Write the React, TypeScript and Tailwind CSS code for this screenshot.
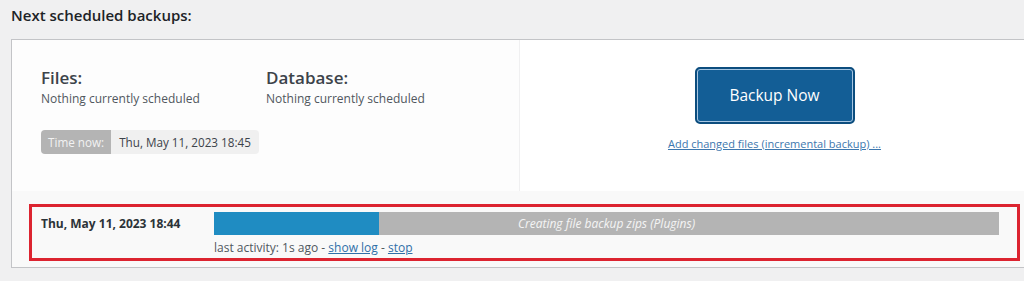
export default function App() {
  const font = { fontFamily: '"Open Sans", "Noto Sans", sans-serif' };

  return (
    <div className="h-[281px] overflow-hidden bg-[#f0f0f1] pt-[5px] text-[#3c434a]" style={font}>
      <h2 className="pl-[11px] text-[15px] leading-[20px] font-semibold text-[#1d2327]">
        Next scheduled backups:
      </h2>

      <div className="ml-[11px] mt-[14px] w-[1019px] border border-[#c3c4c7] bg-white">
        {/* Scheduled section */}
        <div className="flex h-[151px]">
          <div className="w-[508px] border-r border-[#f0f0f1] bg-[#fdfdfd] pl-[29px] pt-[26px]">
            <div className="flex">
              <div className="w-[225px]">
                <div className="text-[17px] leading-[24px] font-semibold text-[#3c434a]">Files:</div>
                <div className="text-[12px] leading-[18px] text-[#50575e]">Nothing currently scheduled</div>
              </div>
              <div>
                <div className="text-[17px] leading-[24px] font-semibold text-[#3c434a]">Database:</div>
                <div className="text-[12px] leading-[18px] text-[#50575e]">Nothing currently scheduled</div>
              </div>
            </div>

            <div className="mt-[22px] inline-flex h-[24px] overflow-hidden rounded-[4px] text-[11.7px] leading-[24px]">
              <span className="bg-[#b4b4b4] px-[7px] text-[#f2f2f2]">Time now:</span>
              <span className="bg-[#f0f0f0] px-[8px] text-[#3c434a]">Thu, May 11, 2023 18:45</span>
            </div>
          </div>

          <div className="flex flex-1 flex-col items-center pt-[27px]">
            <button className="h-[57px] w-[160px] rounded-[5px] border-2 border-[#0c4d7e] bg-[#135e96] text-[15.5px] text-white shadow-[inset_0_0_0_1px_#a7c6e2]">
              Backup Now
            </button>
            <a href="#" className="mt-[12px] text-[11px] leading-[16px] text-[#3d77ae] underline">
              Add changed files (incremental backup) ...
            </a>
          </div>
        </div>

        {/* Running backup */}
        <div className="bg-[#f9f9f9] pt-[13px] pb-[6px] pl-[17px] pr-[9px]">
          <div className="flex border-[3px] border-[#dc2430] pt-[5px] pb-[2px] pl-[9px]">
            <div className="flex h-[23px] w-[173px] shrink-0 items-center text-[12px] font-bold text-[#2c3338]">
              Thu, May 11, 2023 18:44
            </div>
            <div className="w-[785px]">
              <div className="relative flex h-[23px] bg-[#b4b4b4]">
                <div className="h-full w-[165px] bg-[#1f8cc2]" />
                <span className="absolute inset-0 flex items-center justify-center text-[12px] italic text-[#f4f4f4]">
                  Creating file backup zips (Plugins)
                </span>
              </div>
              <div className="mt-[5px] text-[12px] leading-[16px] text-[#50575e]">
                last activity: 1s ago -{' '}
                <a href="#" className="text-[#2f6fa8] underline">show log</a>
                {' '}-{' '}
                <a href="#" className="text-[#2f6fa8] underline">stop</a>
              </div>
            </div>
          </div>
        </div>
      </div>
    </div>
  );
}
